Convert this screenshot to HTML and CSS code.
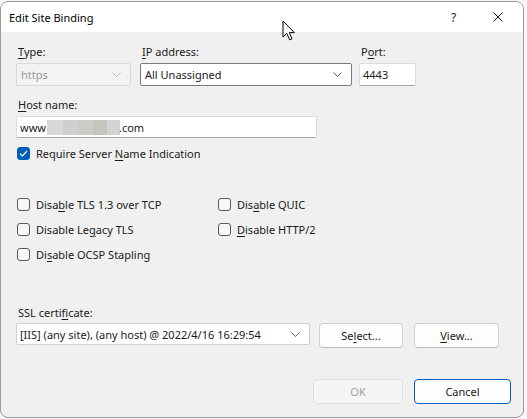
FILE: index.html
```html
<!DOCTYPE html>
<html lang="en">

<head>
    <meta charset="UTF-8" />
    <title>Edit Site Binding</title>
    <link rel="stylesheet" href="styles.css">
</head>

<body>
    <div class="window">
        <div class="titlebar">
            <span class="title">Edit Site Binding</span>
            <span class="help">?</span>
            <svg class="close" width="10" height="10" viewBox="0 0 10 10">
                <path d="M0.5 0.5 L9.5 9.5 M9.5 0.5 L0.5 9.5" stroke="#1a1a1a" stroke-width="1" fill="none" />
            </svg>
        </div>

        <div class="content">
            <div class="top-row">
                <div class="field f-type">
                    <div class="label"><u>T</u>ype:</div>
                    <div class="combo disabled">
                        <span>https</span>
                        <svg class="chev" width="9" height="5" viewBox="0 0 9 5"><path d="M0.5 0.5 L4.5 4.5 L8.5 0.5" /></svg>
                    </div>
                </div>
                <div class="field f-ip">
                    <div class="label"><u>I</u>P address:</div>
                    <div class="combo hot">
                        <span>All Unassigned</span>
                        <svg class="chev" width="9" height="5" viewBox="0 0 9 5"><path d="M0.5 0.5 L4.5 4.5 L8.5 0.5" /></svg>
                    </div>
                </div>
                <div class="field f-port">
                    <div class="label">P<u>o</u>rt:</div>
                    <div class="textbox">4443</div>
                </div>
            </div>

            <div class="field f-host">
                <div class="label"><u>H</u>ost name:</div>
                <div class="textbox">www<span class="blur"><i class="b1"></i><i class="b2"></i><i class="b3"></i><i class="b4"></i><i class="b5"></i></span>.com</div>
            </div>

            <div class="check sni">
                <span class="box checked">
                    <svg width="9" height="7" viewBox="0 0 9 7"><path d="M1 3.6 L3.4 6 L8 1" /></svg>
                </span>
                <span>Require Server <u>N</u>ame Indication</span>
            </div>

            <div class="options">
                <div class="check"><span class="box"></span><span>Disa<u>b</u>le TLS 1.3 over TCP</span></div>
                <div class="check"><span class="box"></span><span>Dis<u>a</u>ble QUIC</span></div>
                <div class="check"><span class="box"></span><span>Disable Le<u>g</u>acy TLS</span></div>
                <div class="check"><span class="box"></span><span><u>D</u>isable HTTP/2</span></div>
                <div class="check"><span class="box"></span><span>Di<u>s</u>able OCSP Stapling</span></div>
            </div>

            <div class="field f-cert">
                <div class="label">SSL certi<u>f</u>icate:</div>
                <div class="cert-row">
                    <div class="combo cert">
                        <span>[IIS] (any site), (any host) @ 2022/4/16 16:29:54</span>
                        <svg class="chev" width="9" height="5" viewBox="0 0 9 5"><path d="M0.5 0.5 L4.5 4.5 L8.5 0.5" /></svg>
                    </div>
                    <button class="btn btn-select">Se<u>l</u>ect...</button>
                    <button class="btn btn-view"><u>V</u>iew...</button>
                </div>
            </div>

            <div class="footer">
                <button class="btn btn-ok" disabled>OK</button>
                <button class="btn btn-cancel">Cancel</button>
            </div>
        </div>

        <svg class="cursor" width="14" height="22" viewBox="0 0 14 22">
            <path d="M1 1 L1 17 L4.8 13.4 L7.6 19.8 L10 18.8 L7.3 12.6 L12.4 12.6 Z" fill="#fff" stroke="#000" stroke-width="1" stroke-linejoin="round" />
        </svg>
    </div>
</body>

</html>
```

FILE: styles.css
```css
* {
    box-sizing: border-box;
}

body {
    margin: 0;
    background-color: #f7f7f7;
    font-family: "Segoe UI", "Noto Sans", sans-serif;
    font-size: 11px;
    color: #1a1a1a;
}

u {
    text-decoration-thickness: 1px;
    text-underline-offset: 2px;
}

.window {
    position: relative;
    width: 524px;
    height: 417px;
    margin-top: 1px;
    background-color: #f0f0f0;
    border: 1px solid #9a9a9a;
    border-radius: 8px;
    overflow: hidden;
}

.titlebar {
    display: flex;
    align-items: center;
    height: 30px;
    padding-left: 8px;
    background-color: #ffffff;
}

.title {
    flex: 1;
    color: #000;
}

.help {
    width: 7px;
    margin-right: 35px;
    font-size: 12px;
    color: #1a1a1a;
}

.close {
    margin-right: 20px;
}

.content {
    padding: 12px 0 0 15px;
}

.label {
    height: 16px;
    line-height: 16px;
    padding-left: 2px;
    margin-bottom: 3px;
}

.top-row {
    display: flex;
}

.f-type {
    width: 115px;
}

.f-ip {
    width: 212px;
    margin-left: 9px;
}

.f-port {
    width: 57px;
    margin-left: 7px;
}

.combo {
    display: flex;
    align-items: center;
    justify-content: space-between;
    height: 23px;
    padding: 0 9px 0 4px;
    background-color: #ffffff;
    border: 1px solid #d0d0d0;
    border-radius: 2px;
}

.combo span {
    white-space: nowrap;
    overflow: hidden;
}

.chev path {
    fill: none;
    stroke: #606060;
    stroke-width: 1;
}

.combo.disabled {
    background-color: #f3f3f3;
    border-color: #dadada;
    color: #9a9a9a;
}

.combo.disabled .chev path {
    stroke: #b8b8b8;
}

.combo.hot {
    border-color: #7a7a7a;
}

.textbox {
    display: flex;
    align-items: center;
    height: 23px;
    padding-left: 3px;
    background-color: #ffffff;
    border: 1px solid #dcdcdc;
    border-bottom-color: #a8a8a8;
    border-radius: 2px;
    white-space: nowrap;
}

.f-host {
    width: 301px;
    margin-top: 11px;
}

.f-host .textbox {
    height: 22px;
}

.blur {
    display: inline-flex;
    height: 15px;
    margin: 0 -1px 0 1px;
}

.blur i {
    display: block;
    height: 15px;
}

.b1 { width: 16px; background-color: #d8d8d8; }
.b2 { width: 15px; background-color: #cfcfcf; }
.b3 { width: 15px; background-color: #cdcbc8; }
.b4 { width: 14px; background-color: #c7c4c0; }
.b5 { width: 13px; background-color: #d3d3d3; }

.check {
    display: flex;
    align-items: center;
    height: 16px;
    gap: 6px;
}

.box {
    display: flex;
    align-items: center;
    justify-content: center;
    width: 13px;
    height: 13px;
    margin-left: 1px;
    border: 1px solid #5a5a5a;
    border-radius: 3px;
    background-color: #f7f7f7;
}

.box.checked {
    background-color: #005fb8;
    border-color: #005fb8;
}

.box svg path {
    fill: none;
    stroke: #ffffff;
    stroke-width: 1.2;
}

.sni {
    margin-top: 7px;
}

.options {
    display: grid;
    grid-template-columns: 201px auto;
    grid-auto-rows: 16px;
    row-gap: 9px;
    margin-top: 35px;
}

.f-cert {
    margin-top: 43px;
}

.f-cert .label {
    margin-bottom: 2px;
}

.cert-row {
    display: flex;
    align-items: flex-start;
}

.combo.cert {
    width: 294px;
    height: 22px;
    padding-left: 3px;
}

.btn {
    height: 25px;
    padding: 0;
    font-family: inherit;
    font-size: 11px;
    color: #1a1a1a;
    background-color: #fdfdfd;
    border: 1px solid #d0d0d0;
    border-bottom-color: #bcbcbc;
    border-radius: 4px;
}

.btn-select {
    width: 84px;
    margin-left: 9px;
}

.btn-view {
    width: 85px;
    margin-left: 11px;
}

.footer {
    display: flex;
    justify-content: flex-end;
    gap: 11px;
    margin-top: 31px;
    padding-right: 12px;
}

.btn-ok {
    width: 90px;
    color: #a0a0a0;
    background-color: #f5f5f5;
    border-color: #e0e0e0;
}

.btn-cancel {
    width: 97px;
    border: 1px solid #005fb8;
    box-shadow: inset 0 0 0 1px #ffffff;
}

.cursor {
    position: absolute;
    left: 281px;
    top: 18px;
}
```
